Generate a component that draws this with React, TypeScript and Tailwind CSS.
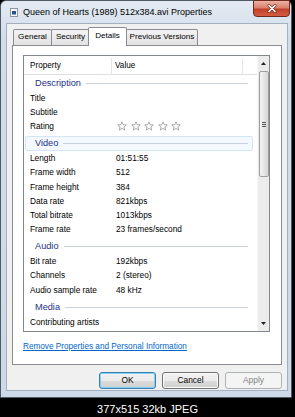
import React from "react";

type Item = { k: string; v?: string; stars?: boolean } | { group: string; hot?: boolean; first?: boolean };

const items: Item[] = [
  { group: "Description", first: true },
  { k: "Title" },
  { k: "Subtitle" },
  { k: "Rating", stars: true },
  { group: "Video", hot: true },
  { k: "Length", v: "01:51:55" },
  { k: "Frame width", v: "512" },
  { k: "Frame height", v: "384" },
  { k: "Data rate", v: "821kbps" },
  { k: "Total bitrate", v: "1013kbps" },
  { k: "Frame rate", v: "23 frames/second" },
  { group: "Audio" },
  { k: "Bit rate", v: "192kbps" },
  { k: "Channels", v: "2 (stereo)" },
  { k: "Audio sample rate", v: "48 kHz" },
  { group: "Media" },
  { k: "Contributing artists" },
];

function Star() {
  return (
    <svg width="10" height="10" viewBox="0 0 10 10">
      <path
        d="M5 0.8 L6.2 3.7 L9.3 3.9 L6.9 5.9 L7.7 9.1 L5 7.4 L2.3 9.1 L3.1 5.9 L0.7 3.9 L3.8 3.7 Z"
        fill="#fbfbfb"
        stroke="#a4a4a4"
        strokeWidth="0.9"
        strokeLinejoin="round"
      />
    </svg>
  );
}

function Group({ label, hot, first }: { label: string; hot?: boolean; first?: boolean }) {
  return (
    <div className={"shrink-0 " + (first ? "h-[16px] pt-[1px]" : "h-[17.8px] pt-[2.8px]")}>
      <div
        className={
          "h-[15px] ml-[1px] mr-[4px] flex items-center pl-[9px] pr-[4px] rounded-[2px] border " +
          (hot ? "border-[#d3e6f5] bg-[#f3f9fe]" : "border-transparent")
        }
      >
        <span className="text-[9.2px] text-[#1e3287] leading-none">{label}</span>
        <div className="flex-1 h-px ml-[5px] bg-[#c9d1dc]" />
      </div>
    </div>
  );
}

function Row({ k, v, stars }: { k: string; v?: string; stars?: boolean }) {
  return (
    <div className="shrink-0 h-[14.2px] flex items-center text-[8.3px] text-black leading-none">
      <div className="w-[92px] pl-[6px] shrink-0">{k}</div>
      {stars ? (
        <div className="flex gap-[3.5px] ml-[1px]">
          <Star />
          <Star />
          <Star />
          <Star />
          <Star />
        </div>
      ) : (
        <div>{v}</div>
      )}
    </div>
  );
}

function Btn({ label, focus, disabled }: { label: string; focus?: boolean; disabled?: boolean }) {
  const cls = disabled
    ? "border-[#adb2b5] bg-[#f4f4f4] text-[#838383]"
    : focus
    ? "border-[#3c7fb1] bg-[linear-gradient(#f2f2f2,#ebebeb_50%,#dddddd_50%,#cfcfcf)] text-black shadow-[inset_0_0_0_1px_#7fd0f4]"
    : "border-[#707070] bg-[linear-gradient(#f2f2f2,#ebebeb_50%,#dddddd_50%,#cfcfcf)] text-black shadow-[inset_0_0_0_1px_#fcfcfc]";
  return (
    <div className={"w-[57px] h-[17px] rounded-[3px] border flex items-center justify-center text-[8.4px] " + cls}>
      {label}
    </div>
  );
}

export default function App() {
  return (
    <div className="w-[295px] h-[417px] bg-black flex flex-col overflow-hidden font-['Liberation_Sans',Arial,sans-serif]">
      <div className="w-[292px] h-[398px] shrink-0 flex flex-col border border-[#505b68] rounded-t-[6px] bg-[linear-gradient(#e3eaf3,#d2dde9_40px,#cdd9e6)]">
        {/* title bar */}
        <div className="h-[22px] shrink-0 flex items-start justify-between">
          <div className="h-full flex items-center pl-[9px] gap-[5px] pt-[1px]">
            <svg width="8" height="9" viewBox="0 0 8 9">
              <rect x="0.5" y="0.5" width="7" height="8" fill="#f4f6f8" stroke="#8a96a4" />
              <rect x="2" y="3" width="4" height="3.5" fill="#2c4f86" />
            </svg>
            <span className="text-[9px] text-black leading-none">Queen of Hearts (1989) 512x384.avi Properties</span>
          </div>
          <div className="w-[37px] h-[17px] -mt-px mr-[1px] rounded-b-[4px] border border-[#6e2a1e] bg-[linear-gradient(#eab1a3,#d9826d_45%,#c2402a_55%,#d45d43)] flex items-center justify-center">
            <svg width="12" height="9" viewBox="0 0 12 9">
              <path d="M3 1.5 L9 7.5 M9 1.5 L3 7.5" stroke="#7a2a1c" strokeWidth="3" strokeLinecap="round" />
              <path d="M3 1.5 L9 7.5 M9 1.5 L3 7.5" stroke="#ffffff" strokeWidth="1.7" strokeLinecap="round" />
            </svg>
          </div>
        </div>

        {/* client */}
        <div className="ml-[5px] mr-[3px] h-[368px] shrink-0 border border-[#a3b0bf] bg-[#f0f0f0] flex flex-col px-[5px] pt-[3px]">
          {/* tabs */}
          <div className="h-[18px] shrink-0 flex items-end pl-[1px] text-[8.1px] text-black leading-none">
            <div className="w-[39px] h-[16px] border border-b-0 border-[#898c95] rounded-t-[2px] bg-[linear-gradient(#f3f3f3,#e2e2e2)] flex items-center justify-center">
              General
            </div>
            <div className="w-[39px] h-[16px] -ml-px border border-b-0 border-[#898c95] rounded-t-[2px] bg-[linear-gradient(#f3f3f3,#e2e2e2)] flex items-center justify-center">
              Security
            </div>
            <div className="relative z-10 w-[39px] h-[19px] -ml-[2px] -mb-px border border-b-0 border-[#898c95] rounded-t-[2px] bg-white flex items-center justify-center pb-[1px]">
              Details
            </div>
            <div className="w-[72px] h-[16px] -ml-px border border-b-0 border-[#898c95] rounded-t-[2px] bg-[linear-gradient(#f3f3f3,#e2e2e2)] flex items-center justify-center">
              Previous Versions
            </div>
          </div>

          {/* panel */}
          <div className="h-[320px] shrink-0 border border-[#898c95] bg-white flex flex-col pt-[9px] pl-[10px] pr-[11px]">
            <div className="h-[277px] shrink-0 border border-[#828790] flex">
              <div className="flex-1 flex flex-col overflow-hidden">
                <div className="h-[19px] shrink-0 flex border-b border-[#dcdfe3] text-[8.2px] leading-none text-black pt-[2px]">
                  <div className="w-[88px] pl-[6px] flex items-center border-r border-[#e3e6ea]">Property</div>
                  <div className="w-[131px] pl-[3px] flex items-center border-r border-[#e3e6ea]">Value</div>
                  <div className="flex-1" />
                </div>
                {items.map((it, i) =>
                  "group" in it ? (
                    <Group key={i} label={it.group} hot={it.hot} first={it.first} />
                  ) : (
                    <Row key={i} k={it.k} v={it.v} stars={it.stars} />
                  )
                )}
              </div>
              {/* scrollbar */}
              <div className="w-[12px] shrink-0 flex flex-col bg-[#ececec] border-l border-[#f7f7f7]">
                <div className="h-[15px] flex items-center justify-center">
                  <svg width="5" height="3" viewBox="0 0 5 3">
                    <path d="M0 3 L2.5 0 L5 3 Z" fill="#222" />
                  </svg>
                </div>
                <div className="h-[106px] mx-[0.5px] rounded-[2px] border border-[#9d9d9d] bg-[linear-gradient(90deg,#f4f4f4,#e6e6e6_50%,#d6d6d6)] flex flex-col items-center justify-center gap-[1px]">
                  <div className="w-[4px] h-px bg-[#555]" />
                  <div className="w-[4px] h-px bg-[#555]" />
                  <div className="w-[4px] h-px bg-[#555]" />
                </div>
                <div className="flex-1" />
                <div className="h-[15px] flex items-center justify-center">
                  <svg width="5" height="3" viewBox="0 0 5 3">
                    <path d="M0 0 L2.5 3 L5 0 Z" fill="#222" />
                  </svg>
                </div>
              </div>
            </div>
            <div className="mt-[10px] h-[10px] flex items-center text-[8.2px] leading-none text-[#0066cc] underline">
              Remove Properties and Personal Information
            </div>
          </div>

          {/* buttons */}
          <div className="mt-[7px] flex justify-end gap-[6px]">
            <Btn label="OK" focus />
            <Btn label="Cancel" />
            <Btn label="Apply" disabled />
          </div>
        </div>
      </div>
      <div className="flex-1 flex items-center justify-center pt-[3px] text-[11px] text-white leading-none">
        377x515 32kb JPEG
      </div>
    </div>
  );
}
